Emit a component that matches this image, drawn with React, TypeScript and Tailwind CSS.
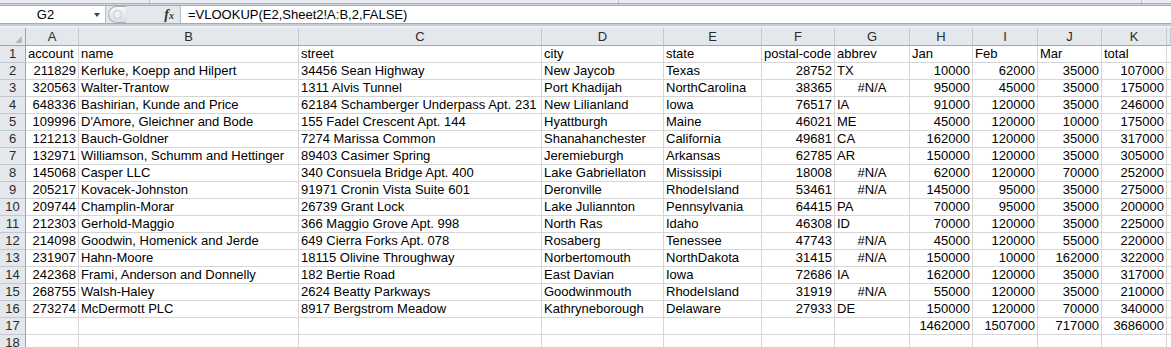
import React from "react";

type Align = "l" | "r" | "c";

const letters = ["A", "B", "C", "D", "E", "F", "G", "H", "I", "J", "K", ""];

const rows: (string | number)[][] = [
  ["account", "name", "street", "city", "state", "postal-code", "abbrev", "Jan", "Feb", "Mar", "total"],
  [211829, "Kerluke, Koepp and Hilpert", "34456 Sean Highway", "New Jaycob", "Texas", 28752, "TX", 10000, 62000, 35000, 107000],
  [320563, "Walter-Trantow", "1311 Alvis Tunnel", "Port Khadijah", "NorthCarolina", 38365, "#N/A", 95000, 45000, 35000, 175000],
  [648336, "Bashirian, Kunde and Price", "62184 Schamberger Underpass Apt. 231", "New Lilianland", "Iowa", 76517, "IA", 91000, 120000, 35000, 246000],
  [109996, "D'Amore, Gleichner and Bode", "155 Fadel Crescent Apt. 144", "Hyattburgh", "Maine", 46021, "ME", 45000, 120000, 10000, 175000],
  [121213, "Bauch-Goldner", "7274 Marissa Common", "Shanahanchester", "California", 49681, "CA", 162000, 120000, 35000, 317000],
  [132971, "Williamson, Schumm and Hettinger", "89403 Casimer Spring", "Jeremieburgh", "Arkansas", 62785, "AR", 150000, 120000, 35000, 305000],
  [145068, "Casper LLC", "340 Consuela Bridge Apt. 400", "Lake Gabriellaton", "Mississipi", 18008, "#N/A", 62000, 120000, 70000, 252000],
  [205217, "Kovacek-Johnston", "91971 Cronin Vista Suite 601", "Deronville", "RhodeIsland", 53461, "#N/A", 145000, 95000, 35000, 275000],
  [209744, "Champlin-Morar", "26739 Grant Lock", "Lake Juliannton", "Pennsylvania", 64415, "PA", 70000, 95000, 35000, 200000],
  [212303, "Gerhold-Maggio", "366 Maggio Grove Apt. 998", "North Ras", "Idaho", 46308, "ID", 70000, 120000, 35000, 225000],
  [214098, "Goodwin, Homenick and Jerde", "649 Cierra Forks Apt. 078", "Rosaberg", "Tenessee", 47743, "#N/A", 45000, 120000, 55000, 220000],
  [231907, "Hahn-Moore", "18115 Olivine Throughway", "Norbertomouth", "NorthDakota", 31415, "#N/A", 150000, 10000, 162000, 322000],
  [242368, "Frami, Anderson and Donnelly", "182 Bertie Road", "East Davian", "Iowa", 72686, "IA", 162000, 120000, 35000, 317000],
  [268755, "Walsh-Haley", "2624 Beatty Parkways", "Goodwinmouth", "RhodeIsland", 31919, "#N/A", 55000, 120000, 35000, 210000],
  [273274, "McDermott PLC", "8917 Bergstrom Meadow", "Kathryneborough", "Delaware", 27933, "DE", 150000, 120000, 70000, 340000],
  ["", "", "", "", "", "", "", 1462000, 1507000, 717000, 3686000],
  ["", "", "", "", "", "", "", "", "", "", ""],
];

function alignOf(v: string | number): Align {
  if (typeof v === "number") return "r";
  if (v === "#N/A") return "c";
  return "l";
}

const alignClass: Record<Align, string> = {
  l: "text-left",
  r: "text-right",
  c: "text-center",
};

function FormulaBar() {
  return (
    <div className="h-[28px] bg-[#dfe3e8]">
      {/* bottom of the ribbon */}
      <div className="flex h-[3px] bg-[#e9edf1]">
        <div className="w-[150px] border-r border-[#b9bec5]" />
        <div className="w-[469px] border-r border-[#b9bec5]" />
        <div className="w-[523px] border-r border-[#b9bec5]" />
      </div>
      <div className="h-[2px] border-t border-[#a9afb7] bg-[#cfd5dc]" />
      <div className="flex h-[19px] border-y border-[#a5acb5] bg-white">
        <div className="relative flex w-[106px] items-center justify-center border-r border-[#b8bec6] text-[13px] text-black">
          <span className="-ml-[14px]">G2</span>
          <span className="absolute right-[5px] top-[7px] h-0 w-0 border-x-[3.5px] border-t-[4px] border-x-transparent border-t-[#444]" />
        </div>
        <div className="flex w-[74px] items-center bg-[#e4e8ed]">
          <div className="ml-[2px] flex h-[17px] w-[18px] items-center justify-center rounded-l-full border border-r-0 border-[#aab1ba] bg-gradient-to-b from-[#f7f8fa] to-[#d9dee4]">
            <div className="h-[9px] w-[9px] rounded-full border border-[#c4c9cf] bg-[#eef0f3]" />
          </div>
          <div className="ml-auto mr-[6px] font-['Liberation_Serif',serif] text-[14px] font-bold italic leading-none text-[#333]">
            f<span className="text-[10px]">x</span>
          </div>
        </div>
        <div className="flex flex-1 items-center border-l border-[#b8bec6] pl-[7px] text-[13px] text-black">
          =VLOOKUP(E2,Sheet2!A:B,2,FALSE)
        </div>
      </div>
      <div className="h-[2px] bg-[#c8ced5]" />
      <div className="h-[2px] bg-[#eef1f4]" />
    </div>
  );
}

export default function App() {
  return (
    <div className="h-[347px] w-[1171px] overflow-hidden bg-white font-['Liberation_Sans',Arial,sans-serif] text-[13px] text-black">
      <FormulaBar />
      <div className="grid grid-cols-[26px_53px_220px_243px_122px_98px_73px_75px_63px_65px_64px_65px_1fr]">
        {/* corner */}
        <div className="relative h-[18px] border-r border-b border-[#9ea5ae] bg-[#e4e7eb]">
          <span className="absolute bottom-[2px] right-[3px] h-0 w-0 border-b-[7px] border-l-[7px] border-l-transparent border-b-[#b4b9bf]" />
        </div>
        {letters.map((l, i) => (
          <div
            key={i}
            className="h-[18px] border-r border-b border-r-[#c3c8ce] border-b-[#9ea5ae] bg-[#e4e7eb] text-center leading-[17px] text-[#2b2b2b]"
          >
            {l}
          </div>
        ))}
        {rows.map((r, ri) => (
          <React.Fragment key={ri}>
            <div className="h-[17px] border-r border-b border-r-[#9ea5ae] border-b-[#c3c8ce] bg-[#e4e7eb] text-center leading-[16px] text-[#2b2b2b]">
              {ri + 1}
            </div>
            {r.map((v, ci) => (
              <div
                key={ci}
                className={`h-[17px] overflow-hidden whitespace-nowrap border-r border-b border-[#d6d6d6] px-[2px] leading-[16px] ${alignClass[ri === 0 ? "l" : alignOf(v)]}`}
              >
                {v}
              </div>
            ))}
            <div className="h-[17px] border-b border-[#d6d6d6]" />
          </React.Fragment>
        ))}
      </div>
    </div>
  );
}
